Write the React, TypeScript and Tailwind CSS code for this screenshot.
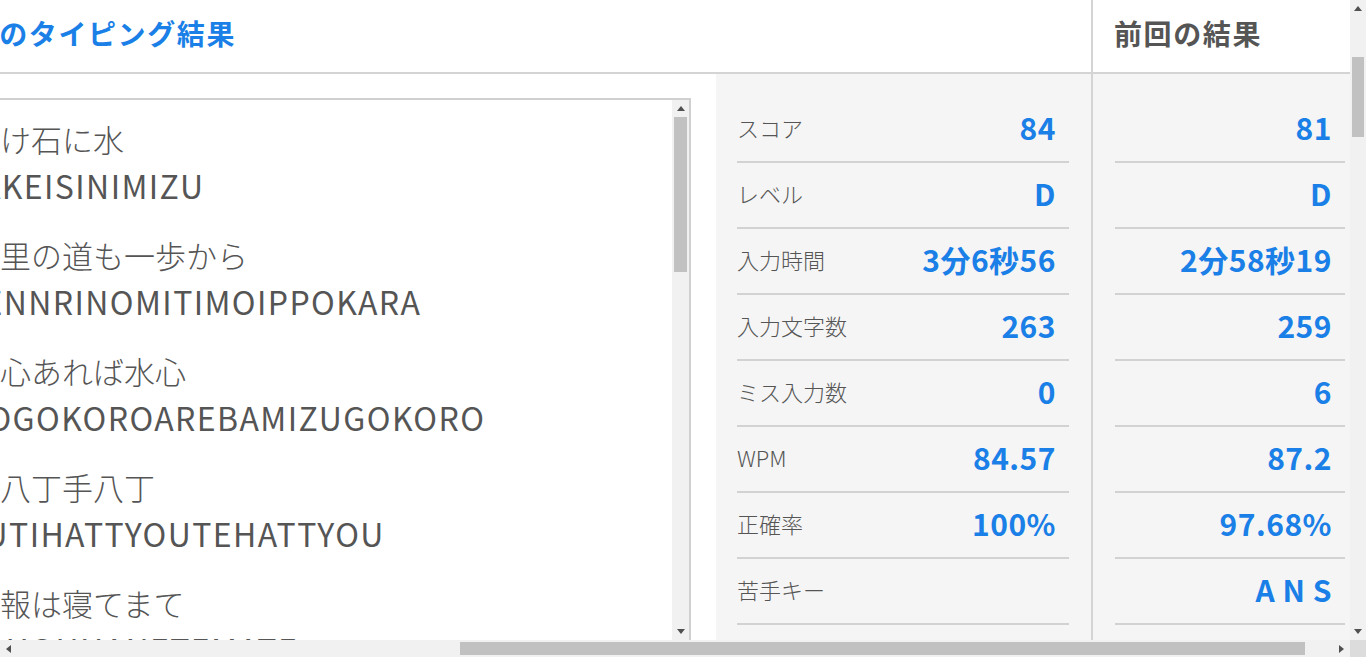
import React from "react";

const jp = { fontFamily: '"Noto Sans CJK JP", "Noto Sans", sans-serif' };

const phrases = [
    { text: "焼け石に水", roma: "YAKEISINIMIZU" },
    { text: "千里の道も一歩から", roma: "SENNRINOMITIMOIPPOKARA" },
    { text: "魚心あれば水心", roma: "UOGOKOROAREBAMIZUGOKORO" },
    { text: "口八丁手八丁", roma: "KUTIHATTYOUTEHATTYOU" },
    { text: "果報は寝てまて", roma: "KAHOUHANETEMATE" },
];

const current = [
    { label: "スコア", value: "84" },
    { label: "レベル", value: "D" },
    { label: "入力時間", value: "3分6秒56" },
    { label: "入力文字数", value: "263" },
    { label: "ミス入力数", value: "0" },
    { label: "WPM", value: "84.57" },
    { label: "正確率", value: "100%" },
    { label: "苦手キー", value: "" },
];

const previous = ["81", "D", "2分58秒19", "259", "6", "87.2", "97.68%", "A N S"];

const Arrow = ({ dir }: { dir: "up" | "down" | "left" | "right" }) => {
    const pts = {
        up: "0,5 4,0 8,5",
        down: "0,0 8,0 4,5",
        left: "5,0 5,8 0,4",
        right: "0,0 0,8 5,4",
    }[dir];
    const vertical = dir === "up" || dir === "down";
    return (
        <svg width={vertical ? 8 : 5} height={vertical ? 5 : 8} viewBox={vertical ? "0 0 8 5" : "0 0 5 8"}>
            <polygon points={pts} fill="#505050" />
        </svg>
    );
};

const App = () => {
    return (
        <div className="w-[1366px] h-[657px] flex flex-col overflow-hidden bg-white" style={jp}>
            <div className="flex h-[640px]">
                {/* page */}
                <div className="w-[1350px] h-[640px] overflow-hidden">
                    <div className="flex ml-[-60px] h-[640px]">
                        {/* left: this time */}
                        <div className="w-[1153px] shrink-0 flex flex-col border-r-2 border-[#d4d4d4]">
                            <div className="h-[74px] border-b-2 border-[#d4d4d4] flex items-center pb-[6px]">
                                <h2 className="text-[28px] font-bold text-[#1a7fe6] leading-none tracking-[1.6px]">
                                    今回のタイピング結果
                                </h2>
                            </div>
                            <div className="flex flex-1 min-h-0">
                                <div className="w-[776px] shrink-0 pt-[24px]">
                                    <div className="w-[751px] h-[544px] border-2 border-[#d0d0d0] flex">
                                        <div className="flex-1 overflow-hidden pt-[16px] pl-[27px]">
                                            {phrases.map((p) => (
                                                <div key={p.roma} className="mb-[24px] leading-[46px] text-[#555] whitespace-nowrap">
                                                    <div className="text-[31px] font-light">{p.text}</div>
                                                    <div className="text-[32px] font-normal tracking-[1.4px] ml-[-6px]">{p.roma}</div>
                                                </div>
                                            ))}
                                        </div>
                                        <div className="w-[17px] bg-[#f1f1f1] flex flex-col items-center">
                                            <div className="h-[17px] flex items-center justify-center">
                                                <Arrow dir="up" />
                                            </div>
                                            <div className="w-[13px] h-[155px] bg-[#c1c1c1]" />
                                            <div className="flex-1" />
                                            <div className="h-[17px] flex items-center justify-center">
                                                <Arrow dir="down" />
                                            </div>
                                        </div>
                                    </div>
                                </div>
                                <div className="w-[375px] shrink-0 bg-[#f5f5f5] pt-[23px] pl-[21px] pr-[22px]">
                                    {current.map((row) => (
                                        <div
                                            key={row.label}
                                            className="h-[66px] border-b-2 border-[#d2d2d2] flex items-center justify-between pr-[13px] pb-[4px]"
                                        >
                                            <span className="text-[22px] font-light text-[#555]">{row.label}</span>
                                            <span className="text-[30px] font-bold text-[#1a7fe6] tracking-[0.5px] leading-none">{row.value}</span>
                                        </div>
                                    ))}
                                </div>
                            </div>
                        </div>
                        {/* right: previous */}
                        <div className="w-[257px] shrink-0 flex flex-col">
                            <div className="h-[74px] border-b-2 border-[#d4d4d4] flex items-center pl-[21px] pb-[6px]">
                                <h2 className="text-[28px] font-bold text-[#555] leading-none tracking-[1.6px]">前回の結果</h2>
                            </div>
                            <div className="flex-1 bg-[#f5f5f5] pt-[23px] pl-[22px] pr-[5px]">
                                {previous.map((v, i) => (
                                    <div
                                        key={i}
                                        className="h-[66px] border-b-2 border-[#d2d2d2] flex items-center justify-end pr-[13px] pb-[4px]"
                                    >
                                        <span className="text-[30px] font-bold text-[#1a7fe6] tracking-[0.5px] leading-none whitespace-pre">{v}</span>
                                    </div>
                                ))}
                            </div>
                        </div>
                    </div>
                </div>
                {/* page vertical scrollbar */}
                <div className="w-[16px] bg-[#f1f1f1] flex flex-col items-center">
                    <div className="h-[17px] flex items-center justify-center">
                        <Arrow dir="up" />
                    </div>
                    <div className="mt-[40px] w-[12px] h-[80px] bg-[#c1c1c1]" />
                    <div className="flex-1" />
                    <div className="h-[17px] flex items-center justify-center">
                        <Arrow dir="down" />
                    </div>
                </div>
            </div>
            {/* page horizontal scrollbar */}
            <div className="h-[17px] flex">
                <div className="w-[1350px] bg-[#f1f1f1] flex items-center">
                    <div className="w-[17px] flex items-center justify-center">
                        <Arrow dir="left" />
                    </div>
                    <div className="ml-[443px] w-[845px] h-[13px] bg-[#c1c1c1]" />
                    <div className="flex-1" />
                    <div className="w-[17px] flex items-center justify-center">
                        <Arrow dir="right" />
                    </div>
                </div>
                <div className="w-[16px] bg-[#dcdcdc]" />
            </div>
        </div>
    );
};

export default App;
